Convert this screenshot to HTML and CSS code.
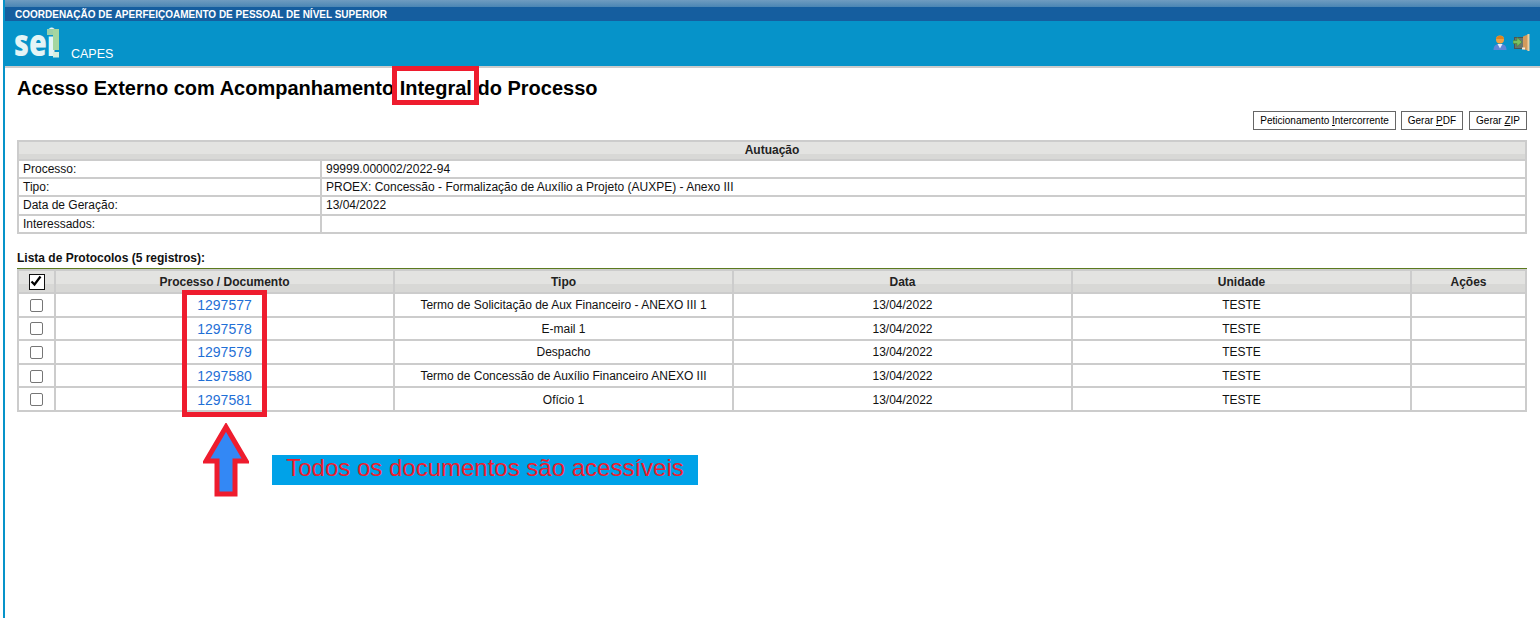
FILE: index.html
```html
<!DOCTYPE html>
<html lang="pt-BR">
<head>
<meta charset="utf-8">
<title>SEI - Acesso Externo</title>
<link rel="stylesheet" href="styles.css">
</head>
<body>
<div class="page">
  <div class="top-strip"></div>
  <div class="org-bar">COORDENAÇÃO DE APERFEIÇOAMENTO DE PESSOAL DE NÍVEL SUPERIOR</div>
  <header class="nav-bar">
    <div class="brand">
      <div class="logo">
        <span class="logo-text">sei</span>
        <svg class="logo-mark" width="14" height="30" viewBox="0 0 14 30"><rect x="0" y="0" width="7" height="7.500" fill="#0693c9"/><rect x="1" y="0" width="6" height="6" fill="#9ccfa8"/><rect x="7" y="0" width="6" height="21" fill="#a5d6a0"/><rect x="7" y="23" width="6" height="5.500" fill="#d8eee0"/></svg>
      </div>
      <span class="unit">CAPES</span>
    </div>
    <div class="nav-icons">
      <svg width="16" height="16" viewBox="0 0 16 16"><path d="M1.500 16c0-4.500 2.500-6 6.500-6s6.500 1.500 6.500 6z" fill="#5f86d8"/><path d="M5.500 10h5l-2.500 4.500z" fill="#e8eefc"/><circle cx="8" cy="5.500" r="4" fill="#f2a040"/><path d="M4 5c.5-4.500 7.500-4.500 8 0z" fill="#dd8420"/></svg>
      <svg width="17" height="17" viewBox="0 0 17 17"><rect x="1.500" y="3.500" width="10" height="11" fill="#68756f" stroke="#4d5550"/><path d="M0 6.500h4v-3l5 4.500-5 4.500v-3H0z" fill="#7cc060" stroke="#4a8a3f" stroke-width=".7"/><path d="M10 2.500l5-2v16l-5-1.500z" fill="#d39a5c"/><rect x="14.500" y="0" width="2" height="17" fill="#f0cfa0"/><rect x="9" y="13.500" width="3" height="2" fill="#f7ead8"/></svg>
    </div>
  </header>
  <main class="content">
    <h1 class="title">Acesso Externo com Acompanhamento Integral do Processo</h1>
    <div class="actions">
      <button class="btn">Peticionamento <u>I</u>ntercorrente</button>
      <button class="btn">Gerar <u>P</u>DF</button>
      <button class="btn">Gerar <u>Z</u>IP</button>
    </div>
    <table class="info">
      <colgroup><col class="info-label"><col></colgroup>
      <tr class="info-head"><th colspan="2">Autuação</th></tr>
      <tr class="r18"><td>Processo:</td><td>99999.000002/2022-94</td></tr>
      <tr class="r18"><td>Tipo:</td><td>PROEX: Concessão - Formalização de Auxílio a Projeto (AUXPE) - Anexo III</td></tr>
      <tr class="r19"><td>Data de Geração:</td><td>13/04/2022</td></tr>
      <tr class="r18"><td>Interessados:</td><td></td></tr>
    </table>
    <div class="caption">Lista de Protocolos (5 registros):</div>
    <table class="list">
      <colgroup><col class="c-check"><col class="c-wide"><col class="c-wide"><col class="c-wide"><col class="c-wide"><col></colgroup>
      <thead>
        <tr><th><span class="check-all"><svg width="14" height="14" viewBox="0 0 14 14"><path d="M2.500 7.500l3 3 6-8" fill="none" stroke="#000" stroke-width="2.200"/></svg></span></th><th>Processo / Documento</th><th>Tipo</th><th>Data</th><th>Unidade</th><th>Ações</th></tr>
      </thead>
      <tbody>
        <tr><td><span class="check"></span></td><td><a href="#">1297577</a></td><td>Termo de Solicitação de Aux Financeiro - ANEXO III 1</td><td>13/04/2022</td><td>TESTE</td><td></td></tr>
        <tr><td><span class="check"></span></td><td><a href="#">1297578</a></td><td>E-mail 1</td><td>13/04/2022</td><td>TESTE</td><td></td></tr>
        <tr><td><span class="check"></span></td><td><a href="#">1297579</a></td><td>Despacho</td><td>13/04/2022</td><td>TESTE</td><td></td></tr>
        <tr><td><span class="check"></span></td><td><a href="#">1297580</a></td><td>Termo de Concessão de Auxílio Financeiro ANEXO III</td><td>13/04/2022</td><td>TESTE</td><td></td></tr>
        <tr><td><span class="check"></span></td><td><a href="#">1297581</a></td><td>Ofício 1</td><td>13/04/2022</td><td>TESTE</td><td></td></tr>
      </tbody>
    </table>
  </main>
  <div class="mark mark-title"></div>
  <div class="mark mark-links"></div>
  <svg class="arrow" width="46" height="74" viewBox="0 0 46 74"><path d="M23 4L43 38H32V71H14V38H3z" fill="#3388f5" stroke="#ee1c2e" stroke-width="5" stroke-linejoin="miter" stroke-miterlimit="3"/></svg>
  <div class="note">Todos os documentos são acessíveis</div>
</div>
</body>
</html>
```
FILE: styles.css
```css
* { box-sizing: border-box; }
html, body { margin: 0; padding: 0; background: #fff; }
body { font-family: "Liberation Sans", Arial, sans-serif; color: #000; overflow: hidden; }
.page { position: relative; width: 1537px; height: 618px; margin-left: 3px; border-left: 2px solid #0693c9; overflow: hidden; }
.top-strip { height: 7px; background: linear-gradient(#6f9cc0, #4a86b4); }
.org-bar { height: 14px; background: #155e9f; color: #fff; font-size: 10px; font-weight: bold; line-height: 15px; padding-left: 10px; }
.nav-bar { height: 47px; background: #0693c9; border-bottom: 2px solid #ccc; display: flex; justify-content: space-between; }
.brand { display: flex; align-items: flex-start; padding-left: 10px; color: #fff; }
.logo { position: relative; width: 46px; height: 40px; }
.logo-text { display: block; font-family: "Open Sans", sans-serif; font-weight: 800; font-size: 37px; line-height: 40px; height: 40px; color: #e4f4f6; transform: scaleX(.78); transform-origin: left top; margin-top: 1px; margin-left: -1px; white-space: nowrap; }
.logo-mark { position: absolute; left: 31px; top: 8px; }
.unit { font-size: 12.500px; margin-left: 10px; margin-top: 26px; line-height: 14px; }
.nav-icons { display: flex; gap: 5px; align-items: flex-start; padding: 13px 10px 0 0; }
.content { padding: 0 13px 0 12px; }
.title { margin: 0; font-size: 20px; line-height: 23px; font-weight: bold; padding-top: 9px; }
.actions { display: flex; justify-content: flex-end; gap: 5px; margin-top: 11px; height: 19px; }
.btn { font: 10px "Liberation Sans", Arial, sans-serif; height: 19px; padding: 0 6px; background: #fff; border: 1px solid #666; color: #000; border-radius: 0; }
.btn:last-child { margin-left: 1px; }
table { border-collapse: collapse; table-layout: fixed; width: 1510px; font-size: 12px; }
.info { margin-top: 10px; border: 2px solid #ccc; }
.info th { height: 19px; padding: 0 0 1px; background: linear-gradient(#e3e3e1 70%, #d8d8d6 70%); border: 2px solid #ccc; font-size: 12px; line-height: 14px; color: #222; }
.info td { padding: 0 0 0 4px; border: 2px solid #ccc; line-height: 14px; color: #111; overflow: hidden; white-space: nowrap; }
.info-label { width: 303px; }
.r18 td { height: 18px; }
.r19 td { height: 19px; padding-bottom: 1px; }
.caption { font-size: 12px; font-weight: bold; line-height: 14px; margin-top: 17px; height: 18px; border-bottom: 1px solid #5b7a1e; color: #111; }
.list th { height: 23px; padding: 0; border: 2px solid #ccc; background: linear-gradient(#e3e3e1 60%, #d8d8d6 60%); font-size: 12px; color: #222; }
.list td { height: 23.600px; padding: 1px 0 0; border: 2px solid #ccc; text-align: center; color: #111; }
.list td a { font-size: 14px; color: #1f6fd6; text-decoration: none; }
.c-check { width: 37px; }
.c-wide { width: 339px; }
.check, .check-all { display: block; margin: 0 auto; }
.check { width: 13px; height: 13px; border: 1px solid #767676; border-radius: 2px; background: #fff; }
.check-all { width: 16px; height: 16px; border: 1.500px solid #111; background: #fff; }
.check-all svg { display: block; margin: -0.500px; }
.mark { position: absolute; border: 5px solid #ee1c2e; }
.mark-title { left: 387px; top: 66px; width: 87px; height: 39px; }
.mark-links { left: 177px; top: 290px; width: 85px; height: 127px; }
.arrow { position: absolute; left: 198px; top: 423px; }
.note { position: absolute; left: 267px; top: 455px; width: 426px; height: 30px; background: #00a2e8; color: #ee1c2e; font-size: 24px; line-height: 25px; text-align: center; white-space: nowrap; }
```
